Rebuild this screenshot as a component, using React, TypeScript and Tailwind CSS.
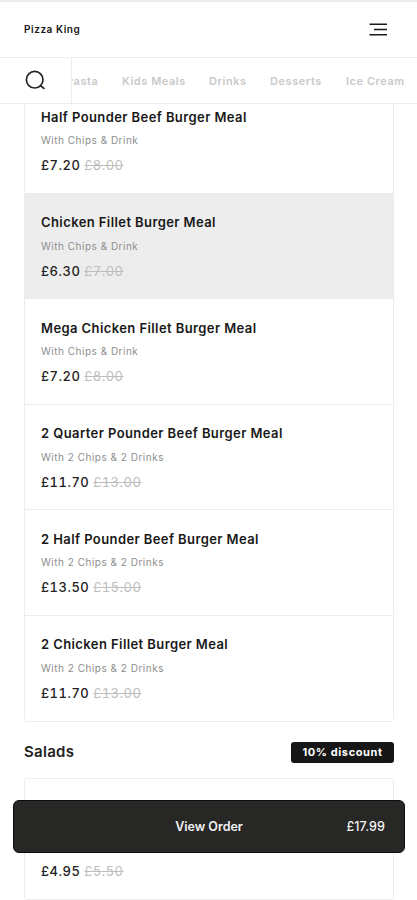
interface MenuItem {
  name: string;
  description: string;
  price: string;
  oldPrice: string;
  active?: boolean;
}

const mealDeals: MenuItem[] = [
  { name: 'Half Pounder Beef Burger Meal', description: 'With Chips & Drink', price: '£7.20', oldPrice: '£8.00' },
  { name: 'Chicken Fillet Burger Meal', description: 'With Chips & Drink', price: '£6.30', oldPrice: '£7.00', active: true },
  { name: 'Mega Chicken Fillet Burger Meal', description: 'With Chips & Drink', price: '£7.20', oldPrice: '£8.00' },
  { name: '2 Quarter Pounder Beef Burger Meal', description: 'With 2 Chips & 2 Drinks', price: '£11.70', oldPrice: '£13.00' },
  { name: '2 Half Pounder Beef Burger Meal', description: 'With 2 Chips & 2 Drinks', price: '£13.50', oldPrice: '£15.00' },
  { name: '2 Chicken Fillet Burger Meal', description: 'With 2 Chips & 2 Drinks', price: '£11.70', oldPrice: '£13.00' },
];

const Price = ({ price, oldPrice }: { price: string; oldPrice: string }) => (
  <p className="text-[13px] leading-5 tracking-[0.5px] tabular-nums text-[#222] whitespace-nowrap">
    <span className="font-medium">{price}</span>
    <span className="ml-1 text-[#bdbdbd] line-through">{oldPrice}</span>
  </p>
);

const Header = () => (
  <header className="relative z-10 bg-white">
    <div className="flex h-[58px] items-center justify-between border-t-2 border-b border-t-[#ececec] border-b-[#ededed] pl-6 pr-[30px]">
      <h1 className="text-[10px] font-semibold tracking-[0.55px] text-[#151515]">Pizza King</h1>
      <button aria-label="Menu">
        <svg width="18" height="13" viewBox="0 0 18 13" fill="none" stroke="#1a1a1a" strokeWidth="1.6">
          <path d="M0.5 1.3H18M5 6.5H18M0.5 11.7H18" />
        </svg>
      </button>
    </div>
    <div className="flex h-[46px] border-b border-[#ededed]">
      <button aria-label="Search" className="flex w-[72px] shrink-0 items-center border-r border-[#ededed] pl-[25px]">
        <svg width="21" height="21" viewBox="0 0 21 21" fill="none" stroke="#222" strokeWidth="1.7">
          <circle cx="9.7" cy="9.7" r="8.3" />
          <path d="M15.3 15.3L19.4 18.9" />
        </svg>
      </button>
      <nav className="flex flex-1 items-center overflow-hidden whitespace-nowrap pt-px text-[11px] font-semibold tracking-[0.55px] text-[#c9c9c9]">
        <span className="-ml-[6px] w-[56px] shrink-0">Pasta</span>
        <span className="w-[87px] shrink-0">Kids Meals</span>
        <span className="w-[61px] shrink-0">Drinks</span>
        <span className="w-[76px] shrink-0">Desserts</span>
        <span className="shrink-0">Ice Cream</span>
      </nav>
    </div>
  </header>
);

const MenuRow = ({ item }: { item: MenuItem }) => (
  <li
    className={`h-[105.5px] border-b border-[#ededed] px-4 pt-[18.5px] last:h-[105px] last:border-b-0 ${item.active ? 'bg-[#ededed]' : 'bg-white'}`}
  >
    <h3 className="text-[13px] font-semibold leading-5 tracking-[0.41px] text-[#181818] whitespace-nowrap">{item.name}</h3>
    <p className="mt-[5.5px] text-[10px] leading-4 tracking-[0.5px] text-[#8e8e8e]">{item.description}</p>
    <div className="mt-[7px]">
      <Price price={item.price} oldPrice={item.oldPrice} />
    </div>
  </li>
);

const App = () => {
  return (
    <div className="relative flex h-[900px] w-[417px] flex-col overflow-hidden bg-white font-['Inter',sans-serif]">
      <Header />

      <main className="pl-6 pr-[23px]">
        <ul className="-mt-[17px] rounded-[3px] border border-[#ededed]">
          {mealDeals.map((item) => (
            <MenuRow key={item.name} item={item} />
          ))}
        </ul>

        <div className="flex h-[56px] items-center justify-between pt-[5px]">
          <h2 className="text-[15px] font-semibold tracking-[0.3px] text-[#222]">Salads</h2>
          <span className="flex h-[21px] w-[103px] items-center justify-center rounded-[3px] bg-[#161616] text-[11px] font-bold tracking-[0.6px] text-white">
            10% discount
          </span>
        </div>

        <div className="flex h-[122px] items-end rounded-[3px] border border-[#ededed] px-4 pb-[18px]">
          <Price price="£4.95" oldPrice="£5.50" />
        </div>
      </main>

      {/* Sticky order bar */}
      <button className="absolute left-[13px] top-[800px] z-20 grid h-[53px] w-[392px] grid-cols-[1fr_auto_1fr] items-center rounded-md border border-[#0c0c0c] bg-[#272725] px-[19px] pt-px text-[12.5px] text-[#f2f2f2]">
        <span />
        <span className="font-semibold">View Order</span>
        <span className="text-right font-medium tracking-[0.1px]">£17.99</span>
      </button>
    </div>
  );
};

export default App;
